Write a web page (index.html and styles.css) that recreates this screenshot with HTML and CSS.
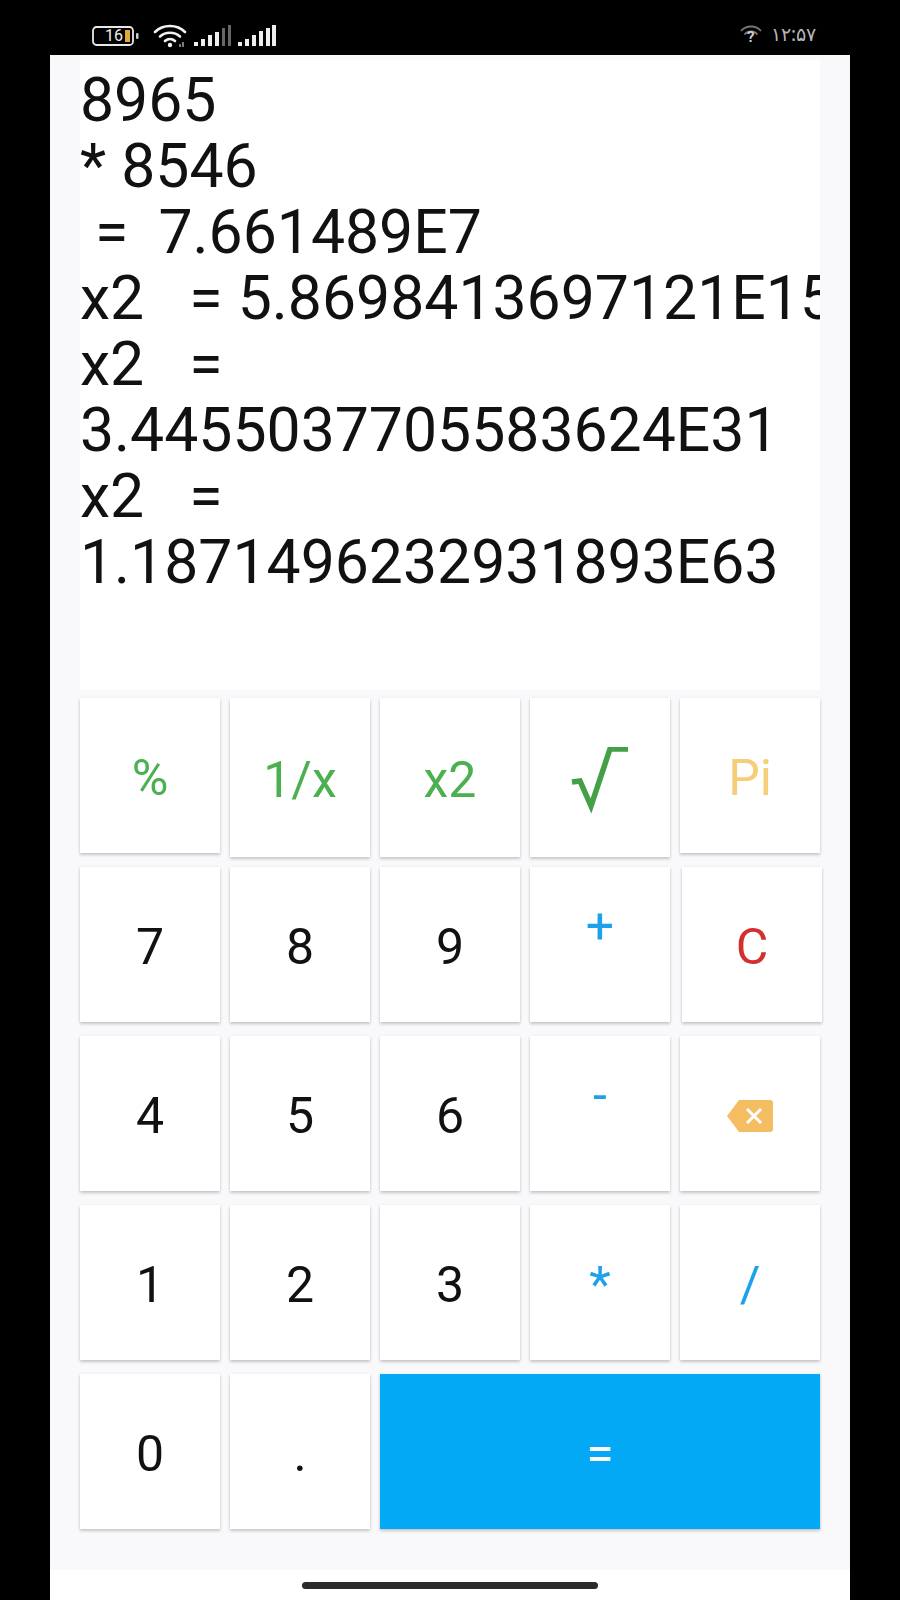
FILE: index.html
```html
<!DOCTYPE html>
<html lang="en">
<head>
<meta charset="utf-8">
<title>Calculator</title>
<link rel="stylesheet" href="styles.css">
</head>
<body>
<div class="phone">
  <header class="status">
    <div class="status-left">
      <div class="batt">
        <svg viewBox="0 0 47 20" width="47" height="20"><rect x="1" y="1" width="40" height="18" rx="3.500" fill="none" stroke="#e8e8e8" stroke-width="1.800"/><rect x="33" y="4" width="5" height="12" fill="#e0a93c"/><rect x="44" y="7" width="2.500" height="6" rx="1" fill="#ccc"/></svg>
        <span class="batt-num">16</span>
      </div>
      <svg class="ico-wifi" viewBox="0 0 36 24" width="36" height="24"><g fill="none" stroke="#f2f2f2" stroke-width="2.600" stroke-linecap="round"><path d="M2 8C10 0 24 0 32 8"/><path d="M7 12.500C12.500 7.500 21.500 7.500 27 12.500"/><path d="M12 17C15 14.500 19 14.500 22 17"/></g><circle cx="17" cy="21" r="2.200" fill="#f2f2f2"/><path d="M27 20V23M30 18V23" stroke="#bbb" stroke-width="1.300"/></svg>
      <svg class="ico-sig" viewBox="0 0 39 22" width="39" height="22"><g fill="#eee"><rect x="0" y="17" width="4" height="4"/><rect x="7" y="14" width="4" height="7"/><rect x="14" y="10" width="4" height="11"/><rect x="21" y="7" width="4" height="14"/></g><g fill="#666"><rect x="28" y="3" width="3" height="18"/><rect x="34" y="0" width="3" height="21"/></g></svg>
      <svg class="ico-sig" viewBox="0 0 39 22" width="39" height="22"><g fill="#eee"><rect x="0" y="17" width="4" height="4"/><rect x="7" y="14" width="4" height="7"/><rect x="14" y="10" width="4" height="11"/><rect x="21" y="6" width="4" height="15"/><rect x="28" y="3" width="4" height="18"/><rect x="34" y="0" width="4" height="21"/></g></svg>
    </div>
    <div class="status-right">
      <div class="wifi-q">
        <svg viewBox="0 0 22 14" width="22" height="14"><g fill="none" stroke="#777" stroke-width="1.800"><path d="M1 6C6 0 16 0 21 6"/><path d="M4.500 9.500C8 5.500 14 5.500 17.500 9.500"/></g></svg>
        <span class="wifi-mark">?</span>
      </div>
      <span class="clock">۱۲:۵۷</span>
    </div>
  </header>

  <main class="app">
    <section class="display">
      <div class="line">8965</div>
      <div class="line">* 8546</div>
      <div class="line"> =  7.661489E7</div>
      <div class="line">x2   = 5.8698413697121E15</div>
      <div class="line">x2   =</div>
      <div class="line">3.4455037705583624E31</div>
      <div class="line">x2   =</div>
      <div class="line">1.1871496232931893E63</div>
    </section>

    <section class="keys">
      <button class="key green">%</button>
      <button class="key green tall">1/x</button>
      <button class="key green tall">x2</button>
      <button class="key tall"><svg class="ico-sqrt" viewBox="0 0 58 66" width="58" height="66"><path d="M1 35L9 34L20 59L39 2H57" fill="none" stroke="#43a047" stroke-width="5.500"/></svg></button>
      <button class="key amber">Pi</button>

      <button class="key">7</button>
      <button class="key">8</button>
      <button class="key">9</button>
      <button class="key blue up">+</button>
      <button class="key red">C</button>

      <button class="key">4</button>
      <button class="key">5</button>
      <button class="key">6</button>
      <button class="key blue up">-</button>
      <button class="key"><svg class="ico-back" viewBox="0 0 46 32" width="46" height="32"><path d="M12 0H43Q46 0 46 3V29Q46 32 43 32H12L0 16Z" fill="#f4bd62"/><path d="M20 9L34 23M34 9L20 23" stroke="#fff" stroke-width="3" fill="none"/></svg></button>

      <button class="key">1</button>
      <button class="key">2</button>
      <button class="key">3</button>
      <button class="key blue">*</button>
      <button class="key blue">/</button>

      <button class="key">0</button>
      <button class="key">.</button>
      <button class="key equals">=</button>
    </section>
  </main>

  <footer class="nav"><span class="home-bar"></span></footer>
</div>
</body>
</html>
```

FILE: styles.css
```css
* { box-sizing: border-box; }
html, body { margin: 0; padding: 0; background: #000; }
body { width: 900px; height: 1600px; overflow: hidden; font-family: Roboto, "Noto Sans", sans-serif; }

.phone { width: 800px; height: 1600px; margin: 0 auto 0 50px; display: flex; flex-direction: column; background: #fff; }

.status { flex: 0 0 55px; background: #000; display: flex; justify-content: space-between; align-items: center; padding: 16px 34px 0 42px; color: #ddd; }
.status-left { display: flex; align-items: center; gap: 5px; }
.batt { position: relative; width: 47px; height: 20px; margin-right: 9px; }
.batt svg { display: block; }
.batt-num { position: absolute; left: 13px; top: 1px; font-size: 16px; line-height: 18px; color: #eee; }
.status-right { display: flex; align-items: center; gap: 9px; margin-top: -4px; }
.wifi-q { position: relative; width: 22px; height: 18px; }
.wifi-q svg { display: block; }
.wifi-mark { position: absolute; left: 7px; top: 3px; font-size: 15px; line-height: 18px; font-weight: 700; color: #ccc; }
.clock { font-family: "Noto Sans", sans-serif; font-size: 19px; color: #b5b5b5; }

.app { flex: 1; background: #f9f8fb; padding: 5px 30px 0; display: flex; flex-direction: column; }

.display { height: 630px; background: #fff; overflow: hidden; padding-top: 7px; }
.line { font-size: 60.700px; line-height: 66px; color: #111; white-space: pre; padding-top: 1px; margin-bottom: -1px; }

.keys { margin-top: 8px; display: grid; grid-template-columns: repeat(5, 140px); grid-template-rows: repeat(5, 156px); gap: 13px 10px; align-items: start; }

.key { height: 155px; border: 0; padding: 4px 0 0; background: #fff; font-family: inherit; font-size: 50px; color: #111; display: flex; align-items: center; justify-content: center; box-shadow: 0 2px 3px rgba(0,0,0,.2), 0 0 3px rgba(0,0,0,.06); }
.tall { height: 159px; }
.green { color: #4caf50; }
.amber { color: #f6cd78; }
.red { color: #d32f2f; width: 140px; margin-left: 2px; }
.blue { color: #1da1e8; }
.up { padding: 0 0 38px; }
.equals { grid-column: span 3; background: #03a9f4; color: #fff; width: 100%; }

.nav { flex: 0 0 30px; display: flex; align-items: flex-start; justify-content: center; padding-top: 12px; }
.home-bar { width: 296px; height: 7px; border-radius: 4px; background: #2a2a2c; }
```
